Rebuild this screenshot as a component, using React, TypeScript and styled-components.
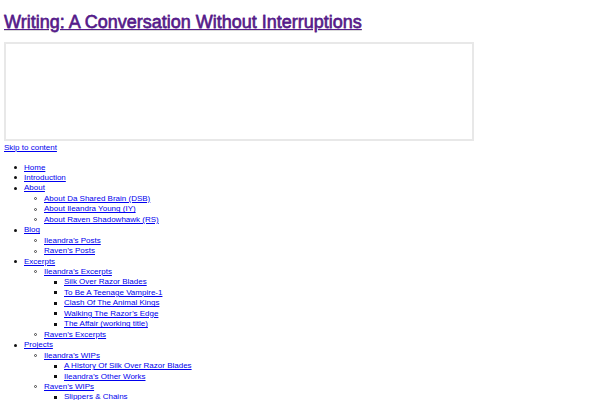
import styled, { createGlobalStyle } from 'styled-components';

const GlobalStyle = createGlobalStyle`
    html, body {
        margin: 0;
        padding: 0;
        background: #fff;
    }
    body {
        font-family: "Liberation Sans", Arial, sans-serif;
    }
`;

const Page = styled.div`
    padding: 0 4px;
`;

const SiteTitle = styled.h1`
    margin: 0;
    padding-top: 11px;
    font-size: 18px;
    line-height: 22px;
    font-weight: normal;
    font-family: "Liberation Sans", Arial, sans-serif;

    a {
        color: #551a8b;
        -webkit-text-stroke: 0.35px #551a8b;
        text-shadow: 0 1px 1px rgba(0, 0, 0, 0.15);
    }
`;

const HeaderFrame = styled.div`
    margin-top: 9px;
    width: 470px;
    height: 99px;
    box-sizing: border-box;
    border: 2px solid #e8e8e8;
    background: #fff;
`;

const SkipLink = styled.a`
    display: block;
    margin-top: 2px;
    font-size: 8px;
    line-height: 10.5px;
    color: #0000ee;
`;

const Menu = styled.ul<{ $level: number }>`
    margin: ${(p) => (p.$level === 1 ? '9px 0 0' : '0')};
    padding: 0 0 0 20px;
    font-size: 8px;
    line-height: 10.45px;
    list-style: none;

    a {
        color: #0000ee;
    }
`;

const MenuItem = styled.li<{ $level: number }>`
    &::before {
        content: '';
        display: inline-block;
        box-sizing: border-box;
        width: 3px;
        height: 3px;
        margin-left: -10.5px;
        margin-right: 7.5px;
        vertical-align: middle;
        background: ${(p) => (p.$level === 2 ? 'transparent' : '#111')};
        border: ${(p) => (p.$level === 2 ? '0.8px solid #444' : 'none')};
        border-radius: ${(p) => (p.$level === 3 ? '0' : '50%')};
    }
`;

type Item = { label: string; children?: Item[] };

const menu: Item[] = [
    { label: 'Home' },
    { label: 'Introduction' },
    {
        label: 'About',
        children: [
            { label: 'About Da Shared Brain (DSB)' },
            { label: 'About Ileandra Young (IY)' },
            { label: 'About Raven Shadowhawk (RS)' },
        ],
    },
    {
        label: 'Blog',
        children: [{ label: 'Ileandra\u2019s Posts' }, { label: 'Raven\u2019s Posts' }],
    },
    {
        label: 'Excerpts',
        children: [
            {
                label: 'Ileandra\u2019s Excerpts',
                children: [
                    { label: 'Silk Over Razor Blades' },
                    { label: 'To Be A Teenage Vampire-1' },
                    { label: 'Clash Of The Animal Kings' },
                    { label: 'Walking The Razor\u2019s Edge' },
                    { label: 'The Affair (working title)' },
                ],
            },
            { label: 'Raven\u2019s Excerpts' },
        ],
    },
    {
        label: 'Projects',
        children: [
            {
                label: 'Ileandra\u2019s WIPs',
                children: [
                    { label: 'A History Of Silk Over Razor Blades' },
                    { label: 'Ileandra\u2019s Other Works' },
                ],
            },
            {
                label: 'Raven\u2019s WIPs',
                children: [{ label: 'Slippers & Chains' }],
            },
        ],
    },
];

function MenuList({ items, level }: { items: Item[]; level: number }) {
    return (
        <Menu $level={level}>
            {items.map((item, i) => (
                <MenuItem key={i} $level={level}>
                    <a href="#">{item.label}</a>
                    {item.children && <MenuList items={item.children} level={level + 1} />}
                </MenuItem>
            ))}
        </Menu>
    );
}

export default function App() {
    return (
        <Page>
            <GlobalStyle />
            <SiteTitle>
                <a href="#">Writing: A Conversation Without Interruptions</a>
            </SiteTitle>
            <HeaderFrame />
            <SkipLink href="#">Skip to content</SkipLink>
            <MenuList items={menu} level={1} />
        </Page>
    );
}
